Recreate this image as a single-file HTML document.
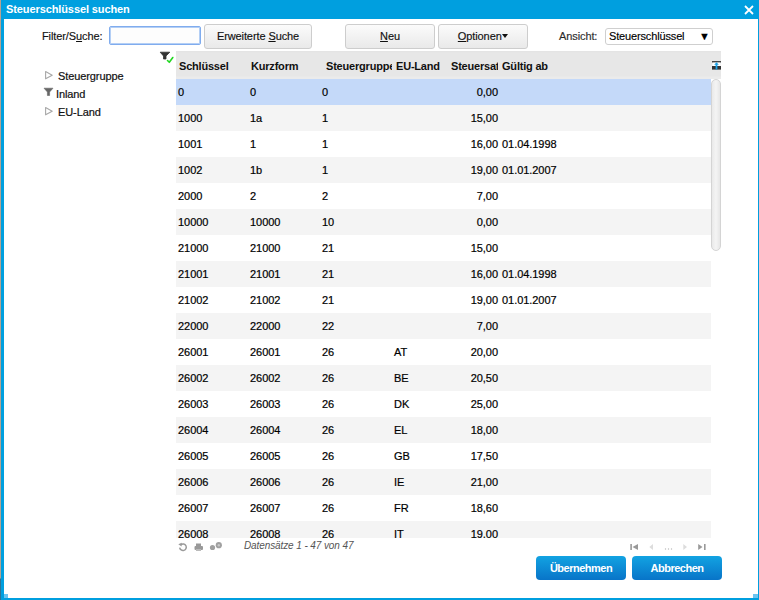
<!DOCTYPE html>
<html><head><meta charset="utf-8">
<style>
*{box-sizing:border-box;margin:0;padding:0}
html,body{width:759px;height:600px;overflow:hidden;background:#fff;font-family:"Liberation Sans",sans-serif;font-size:11px;color:#1a1a1a}
.abs{position:absolute}
#edge{left:0;top:0;width:1px;height:600px;background:linear-gradient(#b5a393 0,#b5a393 578px,#2f7396 579px,#2f7396 600px)}
#frame{left:1px;top:0;width:758px;height:600px;background:#009fdf}
#inner{left:4px;top:19px;width:754px;height:579px;background:#fff}
#grip{left:753px;top:594px;width:5px;height:4px;background:#6cc4f0}
#title{left:6px;top:2px;color:#fff;font-weight:bold;font-size:11px;line-height:14px;letter-spacing:-0.1px}
#close{left:743px;top:4px;width:12px;height:12px}
.lbl{color:#111;font-size:11px;letter-spacing:-0.1px;-webkit-text-stroke:0.15px #111}
.btn{border:1px solid #cdcdcd;border-radius:3px;background:linear-gradient(#fbfbfb,#e9e9e9);text-align:center;color:#111;line-height:22px;letter-spacing:-0.1px;-webkit-text-stroke:0.15px #111}
.u{text-decoration:underline}
#grid{left:176px;top:51px;width:545px;height:487px;overflow:hidden;background:#fff}
.hdr{position:absolute;left:0;top:0;width:545px;height:28px;background:linear-gradient(#e3e3e3,#e7e7e7 2px,#e7e7e7 25px,#ebebeb 26px,#ebebeb)}
.hc{position:absolute;top:0;line-height:30px;font-weight:bold;color:#111;white-space:nowrap;overflow:hidden;letter-spacing:-0.2px}
.row{position:absolute;left:0;width:535px;height:26px}
.row.alt{background:#f4f4f4}
.row.sel{background:#c4d9f9}
.c{position:absolute;top:0;line-height:26px;color:#000;white-space:nowrap;letter-spacing:-0.05px;-webkit-text-stroke:0.2px #000}
.r{text-align:right}
.btnb{border-radius:4px;background:linear-gradient(#12a3e2,#0874c8);color:#fff;font-weight:bold;text-align:center;line-height:24px;letter-spacing:-0.5px}
.tree{color:#111;letter-spacing:-0.1px;-webkit-text-stroke:0.2px #111}
.pg{position:absolute}
</style></head><body>
<div id="edge" class="abs"></div>
<div id="frame" class="abs"></div>
<div id="inner" class="abs"></div>
<div id="grip" class="abs"></div><div class="abs" style="left:4px;top:594px;width:4px;height:4px;background:#6cc4f0"></div>
<div id="title" class="abs">Steuerschlüssel suchen</div>
<svg id="close" class="abs" viewBox="0 0 12 12"><path d="M2 2L10 10M10 2L2 10" stroke="#fff" stroke-width="1.8"/></svg>

<div class="abs lbl" style="left:42px;top:30px">Filter/S<span class="u">u</span>che:</div>
<div class="abs" style="left:109px;top:26px;width:92px;height:19px;border:1px solid #80acee;border-radius:2px;box-shadow:inset 0 0 0 1px #b4cff5;background:#fdfdfd"></div>
<div class="abs btn" style="left:204px;top:24px;width:108px;height:25px">Erweiterte <span class="u">S</span>uche</div>
<div class="abs btn" style="left:345px;top:24px;width:90px;height:25px"><span class="u">N</span>eu</div>
<div class="abs btn" style="left:438px;top:24px;width:90px;height:25px"><span class="u">O</span>ptionen<span style="display:inline-block;width:0;height:0;border-left:3.5px solid transparent;border-right:3.5px solid transparent;border-top:4px solid #111;vertical-align:2px;margin-left:0.5px"></span></div>
<div class="abs lbl" style="left:559px;top:30px;color:#333">Ansicht:</div>
<div class="abs" style="left:605px;top:28px;width:108px;height:17px;border:1px solid #cfcfcf;border-radius:3px;line-height:15px;padding-left:3px;color:#000;letter-spacing:-0.15px;-webkit-text-stroke:0.15px #000">Steuerschlüssel<span style="position:absolute;left:93px;top:0">▼</span></div>

<svg class="abs" style="left:44px;top:70px" width="10" height="11" viewBox="0 0 10 11"><path d="M1.6 1.6L8.2 5.2L1.6 8.8Z" fill="none" stroke="#a8a8a8" stroke-width="1.1" stroke-linejoin="round"/></svg>
<div class="abs tree" style="left:58px;top:70px">Steuergruppe</div>
<svg class="abs" style="left:43px;top:87px" width="11" height="10" viewBox="0 0 11 10"><path d="M1 1.2H10L6.6 5V8.5H4.4V5Z" fill="#666" stroke="#666" stroke-width="0.6" stroke-linejoin="round"/></svg>
<div class="abs tree" style="left:56px;top:88px">Inland</div>
<svg class="abs" style="left:44px;top:106px" width="10" height="11" viewBox="0 0 10 11"><path d="M1.6 1.6L8.2 5.2L1.6 8.8Z" fill="none" stroke="#a8a8a8" stroke-width="1.1" stroke-linejoin="round"/></svg>
<div class="abs tree" style="left:58px;top:106px">EU-Land</div>

<svg class="abs" style="left:159px;top:51px" width="16" height="13" viewBox="0 0 16 13"><path d="M1.2 1.2H10.8L7 5V8H4.5V5Z" fill="#333" stroke="#333" stroke-width="0.8" stroke-linejoin="round"/><path d="M8.5 9.5L10.3 11.3L13.8 6.5" fill="none" stroke="#22d822" stroke-width="1.6" stroke-linecap="round" stroke-linejoin="round"/></svg>

<div id="grid" class="abs">
 <div class="hdr">
  <div class="hc" style="left:3px;width:70px">Schlüssel</div>
  <div class="hc" style="left:75px;width:70px">Kurzform</div>
  <div class="hc" style="left:150px;width:66px">Steuergruppe</div>
  <div class="hc" style="left:220px;width:54px">EU-Land</div>
  <div class="hc" style="left:275px;width:47px">Steuersatz</div>
  <div class="hc" style="left:326px;width:100px">Gültig ab</div>
  <svg style="position:absolute;left:536px;top:10px" width="9" height="9" viewBox="0 0 9 9"><rect x="0" y="0" width="9" height="1.6" fill="#444"/><rect x="0" y="5" width="9" height="3.6" fill="#333"/><rect x="0.5" y="1.6" width="8" height="3.4" fill="#fff"/><path d="M4.5 1.2L6.8 3.8H5.4V8.6H3.6V3.8H2.2Z" fill="#1aa0e6"/></svg>
 </div>
 <div id="rows"><div class="row sel" style="top:28px"><div class="c" style="left:2px">0</div><div class="c" style="left:74px">0</div><div class="c" style="left:146px">0</div><div class="c" style="left:218px"></div><div class="c r" style="left:275px;width:47px">0,00</div><div class="c" style="left:326px"></div></div>
<div class="row alt" style="top:54px"><div class="c" style="left:2px">1000</div><div class="c" style="left:74px">1a</div><div class="c" style="left:146px">1</div><div class="c" style="left:218px"></div><div class="c r" style="left:275px;width:47px">15,00</div><div class="c" style="left:326px"></div></div>
<div class="row" style="top:80px"><div class="c" style="left:2px">1001</div><div class="c" style="left:74px">1</div><div class="c" style="left:146px">1</div><div class="c" style="left:218px"></div><div class="c r" style="left:275px;width:47px">16,00</div><div class="c" style="left:326px">01.04.1998</div></div>
<div class="row alt" style="top:106px"><div class="c" style="left:2px">1002</div><div class="c" style="left:74px">1b</div><div class="c" style="left:146px">1</div><div class="c" style="left:218px"></div><div class="c r" style="left:275px;width:47px">19,00</div><div class="c" style="left:326px">01.01.2007</div></div>
<div class="row" style="top:132px"><div class="c" style="left:2px">2000</div><div class="c" style="left:74px">2</div><div class="c" style="left:146px">2</div><div class="c" style="left:218px"></div><div class="c r" style="left:275px;width:47px">7,00</div><div class="c" style="left:326px"></div></div>
<div class="row alt" style="top:158px"><div class="c" style="left:2px">10000</div><div class="c" style="left:74px">10000</div><div class="c" style="left:146px">10</div><div class="c" style="left:218px"></div><div class="c r" style="left:275px;width:47px">0,00</div><div class="c" style="left:326px"></div></div>
<div class="row" style="top:184px"><div class="c" style="left:2px">21000</div><div class="c" style="left:74px">21000</div><div class="c" style="left:146px">21</div><div class="c" style="left:218px"></div><div class="c r" style="left:275px;width:47px">15,00</div><div class="c" style="left:326px"></div></div>
<div class="row alt" style="top:210px"><div class="c" style="left:2px">21001</div><div class="c" style="left:74px">21001</div><div class="c" style="left:146px">21</div><div class="c" style="left:218px"></div><div class="c r" style="left:275px;width:47px">16,00</div><div class="c" style="left:326px">01.04.1998</div></div>
<div class="row" style="top:236px"><div class="c" style="left:2px">21002</div><div class="c" style="left:74px">21002</div><div class="c" style="left:146px">21</div><div class="c" style="left:218px"></div><div class="c r" style="left:275px;width:47px">19,00</div><div class="c" style="left:326px">01.01.2007</div></div>
<div class="row alt" style="top:262px"><div class="c" style="left:2px">22000</div><div class="c" style="left:74px">22000</div><div class="c" style="left:146px">22</div><div class="c" style="left:218px"></div><div class="c r" style="left:275px;width:47px">7,00</div><div class="c" style="left:326px"></div></div>
<div class="row" style="top:288px"><div class="c" style="left:2px">26001</div><div class="c" style="left:74px">26001</div><div class="c" style="left:146px">26</div><div class="c" style="left:218px">AT</div><div class="c r" style="left:275px;width:47px">20,00</div><div class="c" style="left:326px"></div></div>
<div class="row alt" style="top:314px"><div class="c" style="left:2px">26002</div><div class="c" style="left:74px">26002</div><div class="c" style="left:146px">26</div><div class="c" style="left:218px">BE</div><div class="c r" style="left:275px;width:47px">20,50</div><div class="c" style="left:326px"></div></div>
<div class="row" style="top:340px"><div class="c" style="left:2px">26003</div><div class="c" style="left:74px">26003</div><div class="c" style="left:146px">26</div><div class="c" style="left:218px">DK</div><div class="c r" style="left:275px;width:47px">25,00</div><div class="c" style="left:326px"></div></div>
<div class="row alt" style="top:366px"><div class="c" style="left:2px">26004</div><div class="c" style="left:74px">26004</div><div class="c" style="left:146px">26</div><div class="c" style="left:218px">EL</div><div class="c r" style="left:275px;width:47px">18,00</div><div class="c" style="left:326px"></div></div>
<div class="row" style="top:392px"><div class="c" style="left:2px">26005</div><div class="c" style="left:74px">26005</div><div class="c" style="left:146px">26</div><div class="c" style="left:218px">GB</div><div class="c r" style="left:275px;width:47px">17,50</div><div class="c" style="left:326px"></div></div>
<div class="row alt" style="top:418px"><div class="c" style="left:2px">26006</div><div class="c" style="left:74px">26006</div><div class="c" style="left:146px">26</div><div class="c" style="left:218px">IE</div><div class="c r" style="left:275px;width:47px">21,00</div><div class="c" style="left:326px"></div></div>
<div class="row" style="top:444px"><div class="c" style="left:2px">26007</div><div class="c" style="left:74px">26007</div><div class="c" style="left:146px">26</div><div class="c" style="left:218px">FR</div><div class="c r" style="left:275px;width:47px">18,60</div><div class="c" style="left:326px"></div></div>
<div class="row alt" style="top:470px"><div class="c" style="left:2px">26008</div><div class="c" style="left:74px">26008</div><div class="c" style="left:146px">26</div><div class="c" style="left:218px">IT</div><div class="c r" style="left:275px;width:47px">19,00</div><div class="c" style="left:326px"></div></div></div>
 <div style="position:absolute;left:535px;top:28px;width:10px;height:172px;border:1px solid #d4d4d4;border-radius:5px;background:linear-gradient(90deg,#e9e9e9,#f4f4f4 50%,#e6e6e6)"></div>
</div>

<svg class="abs" style="left:178px;top:542px" width="46" height="10" viewBox="0 0 46 10">
 <path d="M3 2.6A3.3 3.3 0 1 1 1.7 5.6" fill="none" stroke="#9a9a9a" stroke-width="1.5"/><path d="M0.3 2.2L3.8 0.8L3.6 4.6Z" fill="#9a9a9a"/>
 <rect x="18" y="1.5" width="5" height="2.5" fill="#999"/><rect x="16.5" y="4" width="8.5" height="4" rx="1" fill="#999"/><rect x="18" y="7" width="5" height="2" fill="#bbb"/>
 <circle cx="34.5" cy="5.5" r="2.6" fill="#a0a0a0"/><circle cx="40.8" cy="3.2" r="3.1" fill="#a0a0a0"/><circle cx="40.8" cy="3.2" r="1.2" fill="#c8c8c8"/>
</svg>
<div class="abs" style="left:244px;top:540px;font-style:italic;color:#555;font-size:10px;letter-spacing:-0.1px">Datensätze 1 - 47 von 47</div>

<svg class="abs" style="left:628px;top:542px" width="82" height="10" viewBox="0 0 82 10">
 <rect x="2.3" y="2" width="1.6" height="6" fill="#999"/><path d="M4.5 5L10 2V8Z" fill="#999"/>
 <path d="M21.3 5L25 2V8Z" fill="#ddd"/>
 <circle cx="37.5" cy="7" r="0.7" fill="#bbb"/><circle cx="40.5" cy="7" r="0.7" fill="#bbb"/><circle cx="43.5" cy="7" r="0.7" fill="#bbb"/>
 <path d="M55.3 2L59 5L55.3 8Z" fill="#ddd"/>
 <path d="M70.2 2L74.5 5L70.2 8Z" fill="#999"/><rect x="76" y="2" width="1.6" height="6" fill="#999"/>
</svg>

<div class="abs btnb" style="left:536px;top:556px;width:90px;height:24px">Übernehmen</div>
<div class="abs btnb" style="left:632px;top:556px;width:90px;height:24px">Abbrechen</div>
</body></html>
